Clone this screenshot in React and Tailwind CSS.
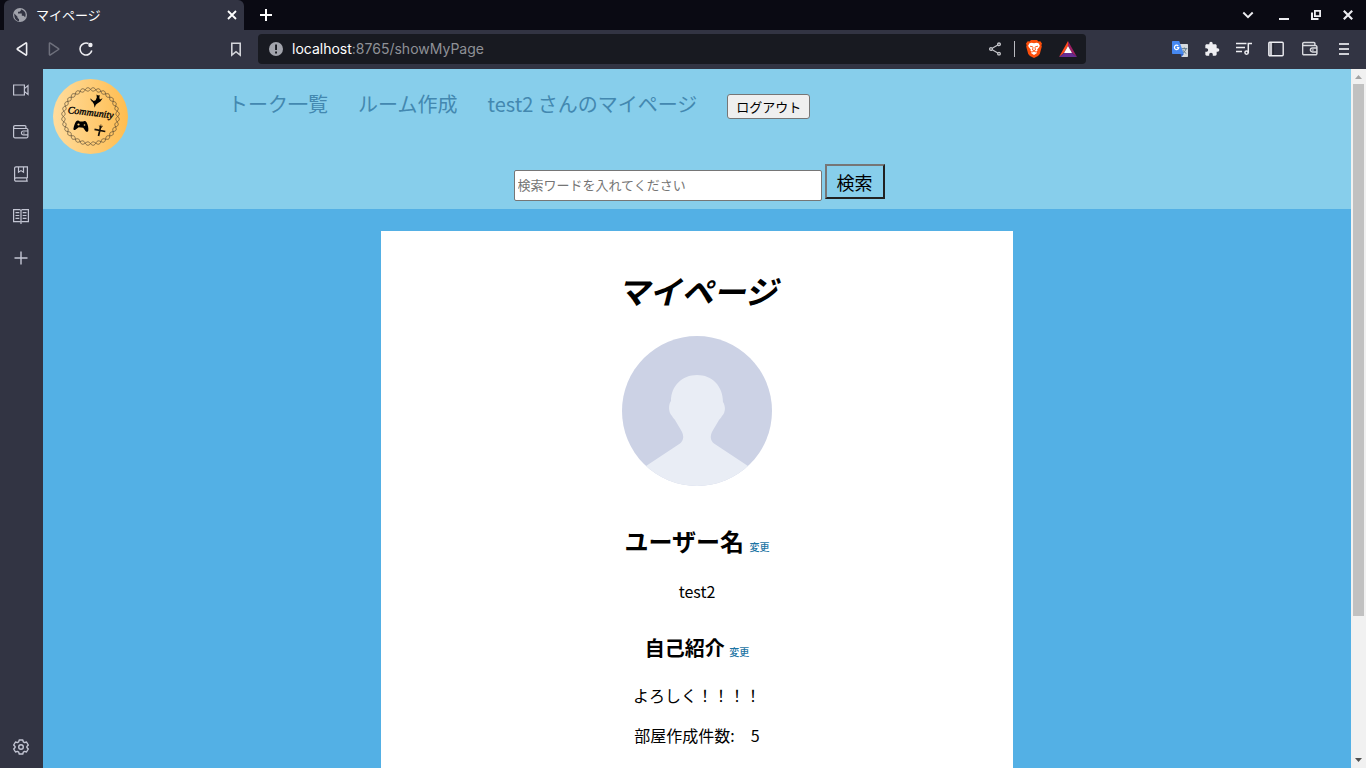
import React from "react";
import { MdExtension, MdOutlineShare } from "react-icons/md";

const jp = "font-['Noto_Sans_CJK_JP',sans-serif]";

function Line({ children, size = 16, stroke = 1.2, className = "" }) {
  return (
    <svg
      width={size}
      height={size}
      viewBox="0 0 16 16"
      fill="none"
      stroke="currentColor"
      strokeWidth={stroke}
      className={className}
      aria-hidden="true"
    >
      {children}
    </svg>
  );
}

function IconButton({ label, className = "", children }) {
  return (
    <button type="button" aria-label={label} className={"flex h-4 w-4 shrink-0 items-center justify-center " + className}>
      {children}
    </button>
  );
}

const walletShape = (
  <>
    <path d="M12.9 4.5V2.6a1 1 0 0 0-1-1H2a1.4 1.4 0 0 0-1.4 1.4v9.4A1.4 1.4 0 0 0 2 13.8h11.5a1.4 1.4 0 0 0 1.4-1.4V5.9a1.4 1.4 0 0 0-1.4-1.4H2A1.4 1.4 0 0 1 .6 3" />
    <path d="M15 7h-4.6a1.9 1.9 0 0 0 0 3.9H15M10.2 9h1.4" />
  </>
);

function GlobeIcon() {
  return (
    <svg width="16" height="16" viewBox="0 0 16 16" aria-hidden="true">
      <circle cx="8" cy="8" r="7" fill="#a0a2ab" />
      <path d="M2.300 6.500L5.500 9.700v1.100l1.500 1.500v1.900C4 13.800 1.900 11 2.300 6.500zM8.900 2.300v1.200L7.500 4.800H6v1.600h3.800v2.300h1.400c.7 0 1.100.4 1.300 1l.6.600c1.300-2.800.6-6.500-4.200-8z" fill="#323443" />
    </svg>
  );
}

function TabStrip() {
  return (
    <div className="flex h-[30px] shrink-0 items-center bg-[#0a0a13] pl-1 pr-[10px] text-white">
      <div className="flex h-full w-60 items-center rounded-t-md bg-[#323443] pl-2 pr-1">
        <GlobeIcon />
        <span className={"ml-2 flex-1 text-[13px] leading-5 " + jp}>マイページ</span>
        <IconButton label="タブを閉じる">
          <Line stroke={1.8}><path d="M4 4l8 8M12 4l-8 8" /></Line>
        </IconButton>
      </div>
      <IconButton label="新しいタブ" className="ml-[14px]">
        <Line stroke={2}><path d="M8 2v12M2 8h12" /></Line>
      </IconButton>
      <div className="ml-auto flex items-center gap-4 text-[#ececf0]">
        <IconButton label="タブを検索" className="mr-1">
          <Line stroke={1.9}><path d="M3.3 5.5L8 10.2l4.7-4.7" /></Line>
        </IconButton>
        <IconButton label="最小化">
          <Line><path d="M3 12h10" strokeWidth="2" /></Line>
        </IconButton>
        <IconButton label="元に戻す">
          <Line><path d="M6.9 3.900h5.200v5.200H6.900z" strokeWidth="1.8" /><path d="M4 5.500V12h6.500" strokeWidth="2" /></Line>
        </IconButton>
        <IconButton label="閉じる">
          <Line stroke={2.2}><path d="M3.8 3.800l8.400 8.400M12.200 3.800l-8.400 8.400" /></Line>
        </IconButton>
      </div>
    </div>
  );
}

function TranslateIcon() {
  return (
    <svg width="16" height="16" viewBox="0 0 16 16" aria-hidden="true">
      <path d="M7 3h8.300a.7.700 0 0 1 .7.700V15.300a.7.700 0 0 1-.7.700H9.500z" fill="#d6dade" />
      <path d="M9.500 7.700h5.800M12.300 6.500v1.200M14 7.700c-.5 2.200-2 3.600-3.300 4.600M11 9.200c.7 1.500 2 2.600 3.300 3.300" stroke="#607988" strokeWidth="1" fill="none" />
      <path d="M8.500 13h3.300L9.500 16z" fill="#2f5fc4" />
      <path d="M.8 0H7.200l4.600 13H.8a.8.800 0 0 1-.8-.8V.8A.8.800 0 0 1 .8 0z" fill="#4688f1" />
      <path d="M6.300 5a2.200 2.200 0 1 0 .5 1.700H4.800" stroke="#fff" strokeWidth="1.200" fill="none" />
    </svg>
  );
}

function ShieldIcon() {
  return (
    <svg width="16" height="18" viewBox="0 0 16 18" aria-hidden="true">
      <path d="M5 0h6l1.500 1.500L14.300 1.300 16 3.500l-.6 1.700.4 1.300-2 7.500-1.800 2L8 18l-4-2-1.800-2-2-7.500.4-1.300L0 3.500l1.700-2.200 1.800.2z" fill="#fb4e0b" />
      <path d="M5.500 2.800L8 3.300l2.500-.5 2 .5 1.300 2.300-.5 1.400-2.100 2.500.3 1.300-1.500 1 1 1.200L8 15l-3-2 1-1.200-1.500-1 .3-1.300L2.700 7l-.5-1.400 1.300-2.300z" fill="#fff" />
      <path d="M4 6.200l2.700.6.3.8-.5 2.300L8 10.600l1.500-.7L9 7.600l.3-.8L12 6.200M6 12l2-.9 2 .9" stroke="#fb4e0b" strokeWidth=".9" fill="none" />
    </svg>
  );
}

function RewardsIcon() {
  return (
    <svg width="18" height="16" viewBox="0 0 18 16" aria-hidden="true">
      <path d="M9 0L0 16l5-4L9 5z" fill="#ff4a1c" />
      <path d="M9 0l9 16-5-4L9 5z" fill="#9e1f63" />
      <path d="M0 16h18l-5-4H5z" fill="#662d91" />
      <path d="M9 5l4 7H5z" fill="#fff" />
    </svg>
  );
}

function Toolbar() {
  return (
    <div className="flex h-[39px] shrink-0 items-center bg-[#323443] px-[14px] pb-px text-[#eeeef2]">
      <div className="flex items-center gap-4">
        <IconButton label="戻る"><Line stroke={1.600}><path d="M12.600 2.600v10.800a.6.600 0 0 1-1 .5L3.500 8.500a.6.600 0 0 1 0-1l8.100-5.400a.6.600 0 0 1 1 .5z" /></Line></IconButton>
        <IconButton label="進む" className="text-[#6e707c]"><Line stroke={1.500}><path d="M3.400 2.600v10.800a.6.600 0 0 0 1 .5l8.100-5.400a.6.600 0 0 0 0-1L4.400 2.100a.6.600 0 0 0-1 .5z" /></Line></IconButton>
        <IconButton label="再読み込み"><Line stroke={1.600}><path d="M13.800 9.500A6 6 0 1 1 10.500 2.500" /><circle cx="12.400" cy="4" r="2.200" fill="currentColor" stroke="none" /></Line></IconButton>
      </div>
      <IconButton label="ブックマーク" className="ml-[134px] mr-[14px] text-[#d3d4da]"><Line stroke={1.600}><path d="M3.800 2.200h8.400v11.900L8 10.700l-4.200 3.400z" /></Line></IconButton>
      <div className="flex h-[30px] w-[828px] min-w-0 items-center rounded bg-[#181a21] pl-[10px] pr-[9px]">
        <svg width="16" height="16" viewBox="0 0 16 16" aria-hidden="true">
          <circle cx="8" cy="8" r="7" fill="#a2a4ac" />
          <path d="M7.100 3.500h1.900v5.500H7.100zM7.100 10.500h1.900v1.900H7.100z" fill="#181a21" />
        </svg>
        <span className="relative ml-2 flex-1 font-['Inter',sans-serif] text-[14px] leading-5">
          <span className="text-white">localhost</span>
          <span className="text-[#8f9197]">:8765/showMyPage</span>
          <input aria-label="アドレス" className="absolute inset-0 w-full bg-transparent outline-none" />
        </span>
        <div className="flex items-center gap-[11px]">
          <IconButton label="共有" className="text-[#c4c5ca]"><MdOutlineShare className="h-4 w-4" /></IconButton>
          <span className="h-4 w-px bg-[#b9bac0]" />
          <button type="button" aria-label="Brave Shields" className="flex w-4"><ShieldIcon /></button>
          <button type="button" aria-label="Brave Rewards" className="ml-[6px] flex w-[18px]"><RewardsIcon /></button>
        </div>
      </div>
      <div className="ml-auto flex items-center gap-4">
        <IconButton label="翻訳"><TranslateIcon /></IconButton>
        <IconButton label="拡張機能"><MdExtension className="h-4 w-4 shrink-0" /></IconButton>
        <IconButton label="再生リスト"><Line stroke={1.500}><path d="M0 2.500h10.500M0 6.500h9M0 10.500h6M12.300 12V2.500H16" /><circle cx="10.600" cy="11.600" r="1.700" /></Line></IconButton>
        <IconButton label="サイドバー"><Line stroke={1.400}><rect x=".8" y="1.300" width="14.400" height="13.400" rx="1" /><path d="M1.500 2h2.700v12H1.500z" fill="currentColor" stroke="none" opacity=".8" /><path d="M5 2v12" stroke="#181a21" strokeWidth="1" /></Line></IconButton>
        <IconButton label="ウォレット" className="ml-[2px] text-[#d8d9de]"><Line stroke={1.500}>{walletShape}</Line></IconButton>
        <IconButton label="メニュー" className="ml-[2px] text-[#cfd0d6]"><Line stroke={1.800}><path d="M3 3h10M3 8h10M3 13h10" /></Line></IconButton>
      </div>
    </div>
  );
}

function Sidebar() {
  return (
    <aside className="flex w-[43px] shrink-0 flex-col items-center gap-[26px] bg-[#323443] pb-[13px] pr-px pt-[13px] text-[#c3c5d3]">
      <IconButton label="通話"><Line><path d="M.6 3h10.800v10H.6zM11.400 6.600L15 3.600v8.800l-3.600-3" /></Line></IconButton>
      <IconButton label="ウォレット"><Line>{walletShape}</Line></IconButton>
      <IconButton label="ブックマーク"><Line><path d="M14.400 11.900V.8H3A1.400 1.400 0 0 0 1.600 2.200v11.600A1.400 1.400 0 0 0 3 15.200h11.800M14.400 11.900H3a1.600 1.600 0 0 0-1.400 1.600M13.800 11.900v3.300M5.500.8v5.400L8 4.600l2.500 1.600V.8" /></Line></IconButton>
      <IconButton label="リーディングリスト"><Line><path d="M.6 1.600h6L8 2.400l1.400-.8h6v12h-6L8 14.400l-1.400-.8h-6zM8 2.400v13.600M2.500 4.700h3.800M2.500 7.500h3.800M2.500 10.300h3.800M9.700 4.700h3.800M9.700 7.500h3.800M9.700 10.300h3.800" /></Line></IconButton>
      <IconButton label="追加"><Line stroke={1.400}><path d="M8 1.500v13M1.500 8h13" /></Line></IconButton>
      <IconButton label="設定" className="mt-auto">
        <Line stroke={1.400}>
          <path d="M6.200 1h3.600l.5 1.900 1.300.7 1.900-.6 1.800 3-1.400 1.400v1.200l1.400 1.400-1.800 3-1.900-.6-1.300.7-.5 1.900H6.200l-.5-1.900-1.300-.7-1.900.6-1.800-3 1.400-1.400V7.400L.7 6l1.800-3 1.900.6 1.300-.7z" strokeLinejoin="round" />
          <circle cx="8" cy="8" r="2.300" />
        </Line>
      </IconButton>
    </aside>
  );
}

function wave(phase) {
  let d = "";
  for (let i = 0; i <= 288; i += 1) {
    const a = (i / 288) * Math.PI * 2;
    const r = 27.2 + 1.7 * Math.sin(a * 16 + phase);
    d += (i ? "L" : "M") + (37.5 + r * Math.cos(a)).toFixed(2) + " " + (37.5 + r * Math.sin(a)).toFixed(2);
  }
  return d + "Z";
}

function CommunityLogo() {
  return (
    <svg width="75" height="75" viewBox="0 0 75 75" role="img" aria-label="Community">
      <defs>
        <linearGradient id="logo-fill" x1="0" x2="1" y1="0" y2="0">
          <stop offset="0" stopColor="#ffdc9d" />
          <stop offset="1" stopColor="#ffbd50" />
        </linearGradient>
      </defs>
      <circle cx="37.500" cy="37.500" r="37.500" fill="url(#logo-fill)" />
      <g fill="none" stroke="#4a4030" strokeWidth=".65">
        <path d={wave(0)} />
        <path d={wave(Math.PI)} />
      </g>
      <path d="M43.500 15.500l1.600.9 1.500-.4-.2 3 .6 1.500 2.600-1.300-2.200 3.300-2.700 1.700-1.900 1.500-1.200 3-.6-3.200-1.200-2.500-2.300-3.200 3.300 2.300 1.800-.8 1.200-2.800z" />
      <path d="M40.500 23.500c-1.500-.7-2.300-2-2.800-3.800" stroke="#000" strokeWidth=".7" fill="none" />
      <text x="14.500" y="34" transform="rotate(7 15 34)" fontFamily="'Liberation Serif', serif" fontStyle="italic" fontSize="10" stroke="#000" strokeWidth=".35">Community</text>
      <path d="M23 42.500c1.500-1.500 3-.9 3.800 0h3.200c1.500-1 3-.5 3.700 1 1.300 2.500 1.900 5.500 1.600 8-.2 1.700-1.800 1.800-2.800.4l-2.300-3.100-4.500-.5-3 2.300c-1.300 1-2.600.5-2.200-1.300.5-2.500 1.200-5 2.500-6.800z" />
      <circle cx="25.500" cy="45.500" r="1.100" fill="#ffce7a" />
      <circle cx="31.500" cy="46" r=".8" fill="#ffce7a" />
      <path d="M41.500 50.300l10.800 2.200M47.800 47l-2.300 10" stroke="#15110a" strokeWidth="1.700" fill="none" />
      <path d="M46.300 46.500l1.200 2.500 2.300-2M47.900 45.500v3" stroke="#15110a" strokeWidth=".8" fill="none" />
    </svg>
  );
}

function SiteHeader() {
  return (
    <header className="bg-[#87ceeb] pb-2 pl-[10px] pt-[10px]">
      <div className="flex items-start">
        <a href="#home"><CommunityLogo /></a>
        <nav className="ml-[100px] flex items-baseline gap-[30px] whitespace-nowrap pt-[10px] text-[20px] leading-[30px] text-[#4388b0]">
          <a href="#talks">トーク一覧</a>
          <a href="#rooms">ルーム作成</a>
          <a href="#mypage">test2 さんのマイページ</a>
          <button type="button" className="h-[25px] w-[83px] rounded-[3px] border border-[#767676] bg-[#efefef] pt-[2px] text-[13px] leading-5 text-black">
            ログアウト
          </button>
        </nav>
      </div>
      <form className="flex items-end justify-center gap-[3px] pr-[6px] pt-[10px]" onSubmit={(e) => e.preventDefault()}>
        <input
          aria-label="検索ワード"
          type="text"
          placeholder="検索ワードを入れてください"
          className="h-[31px] w-[308px] rounded-[2px] border border-[#767676] bg-white px-[3px] pb-[2px] text-[13px] leading-5 placeholder:text-[#757575]"
        />
        <button type="submit" className="mb-[2px] h-[35px] w-[60px] border-2 border-b-[#212121] border-l-[#767676] border-r-[#212121] border-t-[#767676] text-[18px] leading-[26px] text-black">
          検索
        </button>
      </form>
    </header>
  );
}

function Avatar() {
  return (
    <svg width="150" height="150" viewBox="0 0 150 150" role="img" aria-label="プロフィール画像">
      <defs>
        <clipPath id="avatar-clip"><circle cx="75" cy="75" r="75" /></clipPath>
      </defs>
      <g clipPath="url(#avatar-clip)">
        <path d="M0 0h150v150H0z" fill="#ccd2e5" />
        <path d="M75 39C60 39 49 50 49 65C46.500 68 46 76 50 80C51 82 52 82.500 53 84L59.500 95C62 100 62 104 58 107.500L24 130V150H126V130L92 107.500C88 104 88 100 90.500 95L97 84C98 82.500 99 82 100 80C104 76 103.500 70 101 66C101 50 90 39 75 39Z" fill="#e9edf5" />
      </g>
    </svg>
  );
}

function ChangeLink({ href }) {
  return (
    <a href={href} className="text-[10px] font-medium leading-[10px] text-[#1c74a4]">変更</a>
  );
}

function ProfileCard() {
  return (
    <section className="mx-auto mt-[22px] flex w-full max-w-[632px] flex-col items-center bg-white pb-40 pt-9 text-[16px] leading-6 text-black">
      <h1 className="mb-[23px] text-[32px] font-bold italic leading-[46px]">マイページ</h1>
      <Avatar />
      <h2 className="mt-[37px] text-[24px] font-bold leading-[35px]">
        ユーザー名 <ChangeLink href="#name" />
      </h2>
      <p className="mt-[21px]">test2</p>
      <h3 className="mt-[30px] text-[20px] font-bold leading-[29px]">
        自己紹介 <ChangeLink href="#profile" />
      </h3>
      <p className="mt-[21px]">よろしく！！！！</p>
      <p className="mt-4">部屋作成件数:　5</p>
    </section>
  );
}

function Scrollbar() {
  return (
    <div className="flex w-[15px] shrink-0 flex-col items-center bg-[#f1f1f1]" aria-hidden="true">
      <svg width="15" height="15" viewBox="0 0 15 15"><path d="M4 10h7L7.500 6z" fill="#a3a3a3" /></svg>
      <div className="h-[532px] w-[11px] bg-[#c1c1c1]" />
      <svg width="15" height="15" viewBox="0 0 15 15" className="mt-auto"><path d="M4 5h7L7.500 9z" fill="#505050" /></svg>
    </div>
  );
}

export default function App() {
  return (
    <div className="flex h-screen flex-col overflow-hidden">
      <TabStrip />
      <Toolbar />
      <div className="flex min-h-0 flex-1">
        <Sidebar />
        <main lang="ja" className={"min-w-0 flex-1 overflow-hidden bg-[#53b0e5] " + jp}>
          <SiteHeader />
          <ProfileCard />
        </main>
        <Scrollbar />
      </div>
    </div>
  );
}
